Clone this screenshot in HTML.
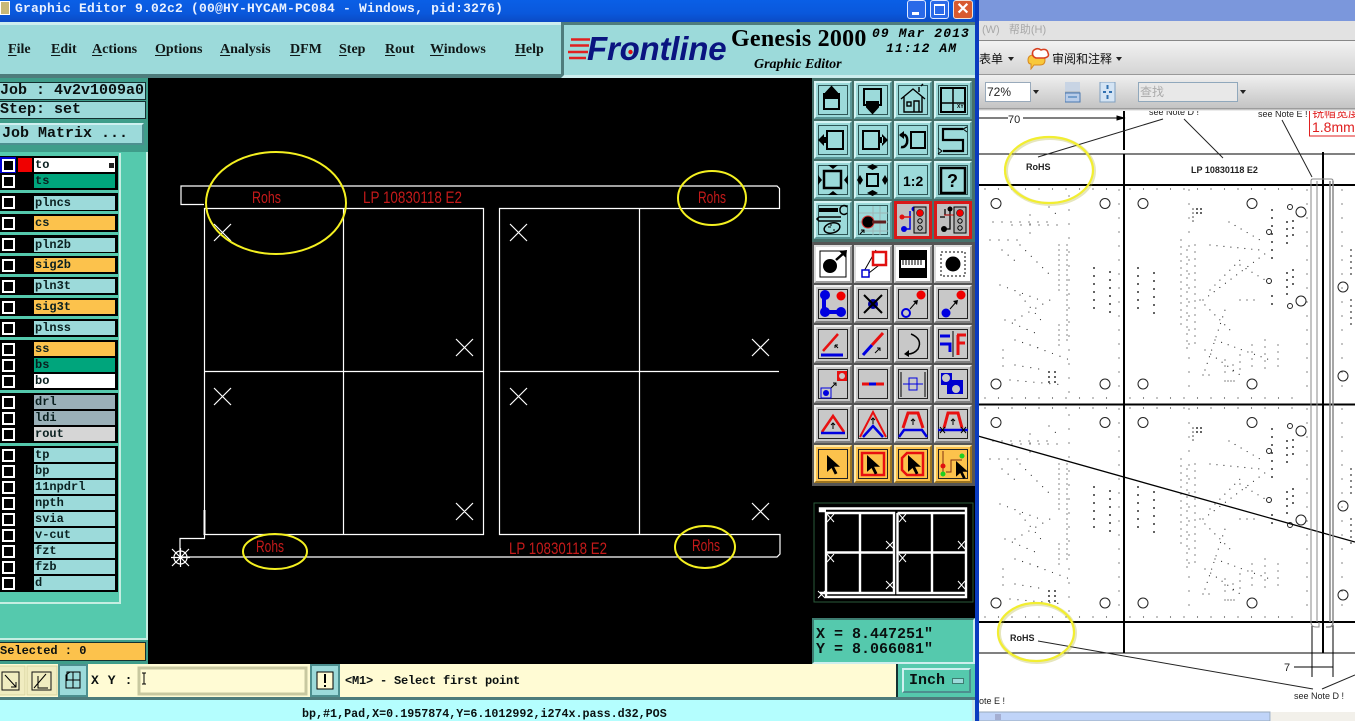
<!DOCTYPE html>
<html><head><meta charset="utf-8"><title>Graphic Editor</title>
<style>
html,body{margin:0;padding:0;background:#000}
#p{position:relative;width:1355px;height:721px;overflow:hidden;background:#55c9ad;font-family:"Liberation Mono",monospace}
#p div,#p svg{position:absolute}
.t{white-space:pre;font:bold 12px/14px "Liberation Mono",monospace;color:#0a1010}
.m{top:41px;font:bold 14px/17px "Liberation Serif",serif;color:#101818;white-space:pre}
.m u{text-underline-offset:2px}
.g{left:0;width:118px;background:#000}
.r{left:34px;width:81px;height:14px;font:bold 12px/14px "Liberation Mono",monospace;color:#0a2020;white-space:pre;padding:0 0 0 1px;box-sizing:border-box;background:#9cdada}
.c{left:2px;width:13px;height:13px;box-sizing:border-box;border:2px solid #fff;background:#000}
.o{background:#fcc24c}.e{background:#00a57c}.w{background:#fff}.y{background:#9ab0b8}.l{background:#d6d6d6}
.bev{box-sizing:border-box;border:2px solid;border-color:#cff0f0 #4d8f8f #4d8f8f #cff0f0}
.cn{font-family:"Liberation Sans","Noto Sans CJK SC",sans-serif;white-space:pre}
</style></head><body><div id="p">

<!-- title bar -->
<div style="left:0;top:0;width:979px;height:22px;background:linear-gradient(#0a5fe6,#0a58dc 60%,#0b4bc4)"></div>
<div style="left:0;top:1px;width:10px;height:14px;background:#c8b878;border:1px solid #fff;box-sizing:border-box"></div>
<div class="t" style="left:15px;top:1px;color:#e8f0ff;font:bold 13px/16px 'Liberation Mono',monospace;letter-spacing:.2px">Graphic Editor 9.02c2 (00@HY-HYCAM-PC084 - Windows, pid:3276)</div>
<div style="left:907px;top:0;width:19px;height:19px;border-radius:3px;border:1px solid #dfe8ff;box-sizing:border-box;background:#2a6ae8"><div style="left:4px;top:11px;width:7px;height:3px;background:#fff"></div></div>
<div style="left:930px;top:0;width:19px;height:19px;border-radius:3px;border:1px solid #dfe8ff;box-sizing:border-box;background:#2a6ae8"><div style="left:3px;top:3px;width:11px;height:11px;border:1px solid #fff;border-top-width:2px;box-sizing:border-box"></div></div>
<div style="left:953px;top:0;width:20px;height:19px;border-radius:3px;border:1px solid #f0e0d8;box-sizing:border-box;background:#d85a30;color:#fff;font:bold 16px/17px 'Liberation Sans',sans-serif;text-align:center">✕</div>

<!-- menu -->
<div style="left:0;top:22px;width:979px;height:3px;background:#cdeeee"></div>
<div style="left:0;top:25px;width:563px;height:49px;background:#9cdada"></div>
<div style="left:0;top:74px;width:563px;height:4px;background:#4e7c7c"></div>
<div class="m" style="left:8px"><u>F</u>ile</div>
<div class="m" style="left:51px"><u>E</u>dit</div>
<div class="m" style="left:92px"><u>A</u>ctions</div>
<div class="m" style="left:155px"><u>O</u>ptions</div>
<div class="m" style="left:220px"><u>A</u>nalysis</div>
<div class="m" style="left:290px"><u>D</u>FM</div>
<div class="m" style="left:339px"><u>S</u>tep</div>
<div class="m" style="left:385px"><u>R</u>out</div>
<div class="m" style="left:430px"><u>W</u>indows</div>
<div class="m" style="left:515px"><u>H</u>elp</div>

<!-- logo -->
<div style="left:561px;top:22px;width:418px;height:56px;background:#9cdada;box-sizing:border-box;border:3px solid;border-color:#4e7c7c #cdeeee #cdeeee #4e7c7c"></div>
<svg style="left:566px;top:36px" width="26" height="26"><path d="M5 3.500H24M4 9.500H23M2 16H22M3 22H20" stroke="#e02020" stroke-width="2.500" fill="none"/></svg>
<div style="left:587px;top:30px;font:italic bold 33px/38px 'Liberation Sans',sans-serif;color:#0a1480;white-space:pre;letter-spacing:-.2px">Frontline</div>
<svg style="left:621px;top:40px" width="20" height="22"><circle cx="9.500" cy="12" r="2.200" fill="#e01010"/></svg>
<div style="left:731px;top:24px;font:bold 24px/30px 'Liberation Serif',serif;color:#000;white-space:pre;letter-spacing:.25px">Genesis 2000</div>
<div style="left:754px;top:56px;font:italic bold 14px/17px 'Liberation Serif',serif;color:#000;white-space:pre">Graphic Editor</div>
<div class="t" style="left:872px;top:26px;font:italic bold 13px/15px 'Liberation Mono',monospace;color:#000;letter-spacing:1.1px">09 Mar 2013</div>
<div class="t" style="left:886px;top:41px;font:italic bold 13px/15px 'Liberation Mono',monospace;color:#000;letter-spacing:1.1px">11:12 AM</div>

<!-- canvas -->
<div style="left:148px;top:78px;width:664px;height:586px;background:#000"></div>
<svg style="left:148px;top:78px" width="664" height="586" viewBox="148 78 664 586">
<g fill="none" stroke="#fff" stroke-width="1.200">
<path d="M204 204.500H181V186H777L779.500 188.500V208.500H499.500V534.500H780V554L777 557H180V538.500H204.500V208.500H483.500V534.500H204.500"/>
<path d="M343.500 209V534M204 371.500H483M639.500 209V534M499 371.500H779"/>
<path d="M204.500 510V535" stroke-width="2"/>
<path d="M214 224L231 241M231 224L214 241M456 339L473 356M473 339L456 356M214 388L231 405M231 388L214 405M456 503L473 520M473 503L456 520M510 224L527 241M527 224L510 241M752 339L769 356M769 339L752 356M510 388L527 405M527 388L510 405M752 503L769 520M769 503L752 520"/>
<circle cx="180.500" cy="557.500" r="6.500"/><path d="M172 549L189 566M189 549L172 566M180.500 548V567M171 557.500H190"/>
</g>
<g fill="#c41a1a" font-family="Liberation Sans,sans-serif" font-size="17">
<text x="252" y="203" textLength="29" lengthAdjust="spacingAndGlyphs">Rohs</text>
<text x="363" y="203" textLength="99" lengthAdjust="spacingAndGlyphs">LP 10830118 E2</text>
<text x="698" y="203" textLength="28" lengthAdjust="spacingAndGlyphs">Rohs</text>
<text x="256" y="552" textLength="28" lengthAdjust="spacingAndGlyphs">Rohs</text>
<text x="509" y="554" textLength="98" lengthAdjust="spacingAndGlyphs">LP 10830118 E2</text>
<text x="692" y="551" textLength="28" lengthAdjust="spacingAndGlyphs">Rohs</text>
</g>
<g fill="none" stroke="#f4f020" stroke-width="2">
<ellipse cx="276" cy="203" rx="70" ry="51"/>
<ellipse cx="712" cy="198" rx="34" ry="27"/>
<ellipse cx="275" cy="551.500" rx="32" ry="17.500"/>
<ellipse cx="705" cy="547" rx="30" ry="21"/>
</g>
</svg>

<!-- left panel -->
<div style="left:0;top:78px;width:148px;height:586px;background:#3f9d8a"></div>
<div class="t" style="left:0;top:82px;width:146px;height:18px;box-sizing:border-box;background:#9cdada;border:1px solid #143030;border-left:0;font-size:15px;line-height:15px">Job : 4v2v1009a0</div>
<div class="t" style="left:0;top:101px;width:146px;height:18px;box-sizing:border-box;background:#9cdada;border:1px solid #143030;border-left:0;font-size:15px;line-height:15px">Step: set</div>
<div class="t bev" style="left:0;top:123px;width:144px;height:22px;background:#9cdada;font-size:15px;line-height:18px;padding-left:2px;border-left:0">Job Matrix ...</div>
<div style="left:0;top:152px;width:146px;height:486px;background:#55c9ad"></div>
<div style="left:119px;top:153px;width:2px;height:450px;background:#c5eee2"></div>
<div style="left:0;top:602px;width:121px;height:2px;background:#c5eee2"></div>
<div style="left:0;top:638px;width:148px;height:2px;background:#c5eee2"></div>
<div style="left:146px;top:152px;width:2px;height:488px;background:#c5eee2"></div>
<div class="t" style="left:0;top:642px;width:146px;height:19px;box-sizing:border-box;background:#fcc24c;border:1px solid #143030;border-left:0;line-height:17px;font-size:12px">Selected : 0</div>

<div class="g" style="top:156px;height:34px"></div>
<div class="g" style="top:193px;height:18px"></div>
<div class="g" style="top:214px;height:18px"></div>
<div class="g" style="top:235px;height:18px"></div>
<div class="g" style="top:256px;height:18px"></div>
<div class="g" style="top:277px;height:18px"></div>
<div class="g" style="top:298px;height:18px"></div>
<div class="g" style="top:319px;height:18px"></div>
<div class="g" style="top:340px;height:50px"></div>
<div class="g" style="top:393px;height:50px"></div>
<div class="g" style="top:446px;height:146px"></div>

<div style="left:0;top:157px;width:16px;height:16px;background:#0000d0"></div>
<div style="left:18px;top:158px;width:14px;height:14px;background:#f00000"></div>
<div class="r w" style="top:158px">to</div>
<div style="left:109px;top:163px;width:5px;height:5px;background:#222"></div>
<div class="r e" style="top:174px">ts</div>
<div class="r" style="top:196px">plncs</div>
<div class="r o" style="top:216px">cs</div>
<div class="r" style="top:238px">pln2b</div>
<div class="r o" style="top:258px">sig2b</div>
<div class="r" style="top:279px">pln3t</div>
<div class="r o" style="top:300px">sig3t</div>
<div class="r" style="top:321px">plnss</div>
<div class="r o" style="top:342px">ss</div>
<div class="r e" style="top:358px">bs</div>
<div class="r w" style="top:374px">bo</div>
<div class="r y" style="top:395px">drl</div>
<div class="r y" style="top:411px">ldi</div>
<div class="r l" style="top:427px">rout</div>
<div class="r" style="top:448px">tp</div>
<div class="r" style="top:464px">bp</div>
<div class="r" style="top:480px">11npdrl</div>
<div class="r" style="top:496px">npth</div>
<div class="r" style="top:512px">svia</div>
<div class="r" style="top:528px">v-cut</div>
<div class="r" style="top:544px">fzt</div>
<div class="r" style="top:560px">fzb</div>
<div class="r" style="top:576px">d</div>

<div class="c" style="top:159px"></div><div class="c" style="top:175px"></div><div class="c" style="top:196px"></div><div class="c" style="top:217px"></div>
<div class="c" style="top:238px"></div><div class="c" style="top:259px"></div><div class="c" style="top:280px"></div><div class="c" style="top:301px"></div>
<div class="c" style="top:322px"></div><div class="c" style="top:343px"></div><div class="c" style="top:359px"></div><div class="c" style="top:375px"></div>
<div class="c" style="top:396px"></div><div class="c" style="top:412px"></div><div class="c" style="top:428px"></div><div class="c" style="top:449px"></div>
<div class="c" style="top:465px"></div><div class="c" style="top:481px"></div><div class="c" style="top:497px"></div><div class="c" style="top:513px"></div>
<div class="c" style="top:529px"></div><div class="c" style="top:545px"></div><div class="c" style="top:561px"></div><div class="c" style="top:577px"></div>

<!-- right toolbar -->
<div style="left:812px;top:78px;width:163px;height:164px;background:#46706a"></div>
<div style="left:812px;top:242px;width:163px;height:244px;background:#555"></div>
<svg style="left:812px;top:78px" width="163" height="410" viewBox="812 78 163 410">
<defs>
<g id="bT"><rect width="38" height="38" fill="#9cdada"/><path d="M0 38V0H38L36 2H2V36Z" fill="#d6f4f4"/><path d="M38 0V38H0L2 36H36V2Z" fill="#5a9696"/><rect x="4.500" y="4.500" width="29" height="29" fill="none" stroke="#2e5656"/></g>
<g id="bG"><rect width="38" height="38" fill="#c8c8c8"/><path d="M0 38V0H38L36 2H2V36Z" fill="#f0f0f0"/><path d="M38 0V38H0L2 36H36V2Z" fill="#808080"/><rect x="4.500" y="4.500" width="29" height="29" fill="none" stroke="#222"/></g>
<g id="bO"><rect width="38" height="38" fill="#fcc24c"/><path d="M0 38V0H38L36 2H2V36Z" fill="#ffe9a8"/><path d="M38 0V38H0L2 36H36V2Z" fill="#9c7420"/><rect x="4.500" y="4.500" width="29" height="29" fill="none" stroke="#222"/></g>
<g id="bW"><rect width="38" height="38" fill="#fff"/><path d="M38 0V38H0L2 36H36V2Z" fill="#a0a0a0"/><path d="M0 38V0H38L36 2H2V36Z" fill="#ddd"/></g>
<path id="arr" d="M0 0L0 13L3.500 10L6 15L8 14L5.500 9L10 9Z" fill="#000"/>
</defs>
<use href="#bT" x="814" y="81"/><use href="#bT" x="854" y="81"/><use href="#bT" x="894" y="81"/><use href="#bT" x="934" y="81"/>
<use href="#bT" x="814" y="121"/><use href="#bT" x="854" y="121"/><use href="#bT" x="894" y="121"/><use href="#bT" x="934" y="121"/>
<use href="#bT" x="814" y="161"/><use href="#bT" x="854" y="161"/><use href="#bT" x="894" y="161"/><use href="#bT" x="934" y="161"/>
<use href="#bT" x="814" y="201"/><use href="#bT" x="854" y="201"/><use href="#bT" x="894" y="201"/><use href="#bT" x="934" y="201"/>
<g fill="none" stroke="#000" stroke-width="2">
<g transform="translate(814,81)"><rect x="10" y="13" width="15" height="15"/><path d="M17.500 6L12 12V17H23V12Z" fill="#000"/></g>
<g transform="translate(854,81)"><rect x="10" y="8" width="17" height="16"/><path d="M18.500 32L13 26V21H24V26Z" fill="#000"/></g>
<g transform="translate(894,81)" stroke-width="1.400"><path d="M7 18L19 8L31 18M10 16V31H28V16M25 11V6M27 5L29 3"/><rect x="13" y="21" width="4" height="4"/><path d="M20 31V20H25V31"/></g>
<g transform="translate(934,81)"><rect x="7" y="7" width="24" height="24"/><path d="M19 7V31M7 22H31" stroke-width="1.500"/></g>
<g transform="translate(814,121)"><rect x="13" y="10" width="16" height="18"/><path d="M4 19L10 13V25Z M9 16H14V22H9Z" fill="#000" stroke="none"/></g>
<g transform="translate(854,121)"><rect x="9" y="10" width="16" height="18"/><path d="M34 19L28 13V25Z M24 16H29V22H24Z" fill="#000" stroke="none"/></g>
<g transform="translate(894,121)"><rect x="17" y="11" width="14" height="16"/><path d="M6 14H11Q14 16 13 22Q11 27 7 26" stroke-width="2.500"/><path d="M5 14L10 10V18Z" fill="#000" stroke="none"/></g>
<g transform="translate(934,121)"><path d="M29 8H9V19H29V30H9" stroke-width="2.200"/><path d="M33 6L29 8L33 11M4 27L8 30L4 33" stroke-width="1"/></g>
<g transform="translate(814,161)"><rect x="10" y="10" width="17" height="17" stroke-width="2.500"/><path d="M19 8L14 4H24ZM19 30L14 34H24ZM8 19L4 14V24ZM30 19L34 14V24Z" fill="#000" stroke="none"/></g>
<g transform="translate(854,161)"><rect x="13" y="13" width="11" height="12"/><path d="M18.500 9L13 6L18.500 3L24 6ZM18.500 29L13 32L18.500 35L24 32ZM9 19L6 14L3 19L6 24ZM28 19L31 14L34 19L31 24Z" fill="#000" stroke="none"/></g>
<g transform="translate(934,161)"><rect x="7" y="7" width="24" height="25" stroke-width="2.500"/></g>
<g transform="translate(814,201)" stroke-width="1.500"><path d="M5 8H24M5 10H24" stroke-width="2"/><path d="M26 9A4 4 0 0 1 33 6M26 9A4 4 0 0 0 33 12"/><path d="M5 16H27M5 16L3 18L5 20H27"/><ellipse cx="18" cy="27" rx="8" ry="5" transform="rotate(-15 18 27)"/><path d="M14 26h3M19 29h2M16 24h2" stroke-width="1"/></g>
<g transform="translate(854,201)"><path d="M5 21H34M19 5V34M5 12H34M5 30H34M26 5V34" stroke="#9cb6b6" stroke-width="1"/><circle cx="14" cy="21" r="6" fill="#000" stroke="#e03030" stroke-width="1"/><path d="M18 21H32" stroke-width="3" stroke="#602020"/><path d="M6 33L10 29M7 29H10V32" stroke-width="1"/></g>
</g>
<g transform="translate(894,201)"><rect x="1.500" y="1.500" width="35" height="35" fill="#c0c0c0" stroke="#d81818" stroke-width="3"/><g fill="none" stroke-width="1.500"><path d="M16 10V28H10" stroke="#0000e0"/><path d="M8 16H17" stroke="#e01010"/></g><circle cx="20" cy="8" r="2.500" fill="#0000e0"/><circle cx="8" cy="16" r="2.500" fill="#e01010"/><circle cx="10" cy="28" r="3" fill="#0000e0"/><rect x="20" y="6" width="12" height="26" fill="#b0b0b0" stroke="#000"/><circle cx="26" cy="12" r="3.500" fill="#f00000" stroke="#000" stroke-width=".5"/><circle cx="26" cy="20" r="2.200" fill="none" stroke="#000"/><circle cx="26" cy="27" r="2.200" fill="none" stroke="#000"/></g>
<g transform="translate(934,201)"><rect x="1.500" y="1.500" width="35" height="35" fill="#c0c0c0" stroke="#d81818" stroke-width="3"/><path d="M16 9V28H10M6 16H11M11 8V14M11 14H16" fill="none" stroke="#000" stroke-width="1.300"/><path d="M10 14H20V11" fill="none" stroke="#d81818"/><circle cx="16" cy="8" r="2.500" fill="#000"/><circle cx="10" cy="28" r="3" fill="#000"/><rect x="20" y="6" width="12" height="26" fill="#b0b0b0" stroke="#000"/><circle cx="26" cy="12" r="3.500" fill="#f00000" stroke="#000" stroke-width=".5"/><circle cx="26" cy="20" r="2.200" fill="none" stroke="#000"/><circle cx="26" cy="27" r="2.200" fill="none" stroke="#000"/></g>
<text x="903" y="186" font-family="Liberation Sans,sans-serif" font-weight="bold" font-size="14" fill="#000">1:2</text>
<text x="947" y="187" font-family="Liberation Sans,sans-serif" font-weight="bold" font-size="18" fill="#000">?</text>
<text x="957" y="108" font-family="Liberation Sans,sans-serif" font-weight="bold" font-size="5" fill="#000">XY</text>

<use href="#bW" x="814" y="245"/><use href="#bW" x="854" y="245"/><use href="#bW" x="894" y="245"/><use href="#bW" x="934" y="245"/>
<use href="#bG" x="814" y="285"/><use href="#bG" x="854" y="285"/><use href="#bG" x="894" y="285"/><use href="#bG" x="934" y="285"/>
<use href="#bG" x="814" y="325"/><use href="#bG" x="854" y="325"/><use href="#bG" x="894" y="325"/><use href="#bG" x="934" y="325"/>
<use href="#bG" x="814" y="365"/><use href="#bG" x="854" y="365"/><use href="#bG" x="894" y="365"/><use href="#bG" x="934" y="365"/>
<use href="#bG" x="814" y="405"/><use href="#bG" x="854" y="405"/><use href="#bG" x="894" y="405"/><use href="#bG" x="934" y="405"/>
<use href="#bO" x="814" y="445"/><use href="#bO" x="854" y="445"/><use href="#bO" x="894" y="445"/><use href="#bO" x="934" y="445"/>

<g transform="translate(814,245)" fill="none" stroke="#000"><rect x="6" y="6" width="26" height="26" stroke-width="1"/><circle cx="16" cy="21" r="6.500" fill="#000"/><path d="M22 15L31 7" stroke-width="2.500"/><path d="M33 5L25 6L32 13Z" fill="#000" stroke="none"/></g>
<g transform="translate(854,245)" fill="none"><path d="M9 28L22 5M11 31L33 14" stroke="#000"/><rect x="19" y="7" width="13" height="13" fill="#fff" stroke="#e01010" stroke-width="2.500"/><rect x="8" y="25" width="7" height="7" fill="#fff" stroke="#0000d0" stroke-width="1.500"/></g>
<g transform="translate(894,245)"><rect x="5" y="5" width="28" height="28" fill="#000"/><rect x="7" y="15" width="24" height="8" fill="#fff"/><path d="M9 15V20M12 15V20M15 15V20M18 15V20M21 15V20M24 15V20M27 15V20" stroke="#000" stroke-width="1"/></g>
<g transform="translate(934,245)"><rect x="7" y="7" width="24" height="24" fill="none" stroke="#000" stroke-dasharray="2 2"/><circle cx="19" cy="19" r="7.500" fill="#000"/></g>

<g transform="translate(814,285)"><path d="M10 10V27H24" fill="none" stroke="#0000e0" stroke-width="4"/><circle cx="11" cy="10" r="5" fill="#0000e0"/><circle cx="11" cy="27" r="5" fill="#0000e0"/><circle cx="27" cy="27" r="5" fill="#0000e0"/><circle cx="27" cy="11" r="4.500" fill="#f00000"/></g>
<g transform="translate(854,285)"><circle cx="19" cy="19" r="5" fill="#0000a0"/><path d="M10 10L28 28M28 10L10 28" stroke="#000" stroke-width="2"/></g>
<g transform="translate(894,285)"><circle cx="12" cy="28" r="4" fill="none" stroke="#0000e0" stroke-width="2"/><circle cx="27" cy="10" r="4.500" fill="#f00000"/><path d="M16 24L23 16" stroke="#000"/><path d="M24 15L19 16L23 20Z"/></g>
<g transform="translate(934,285)"><circle cx="12" cy="28" r="4.500" fill="#0000e0"/><circle cx="27" cy="10" r="4.500" fill="#f00000"/><path d="M16 24L23 16" stroke="#000"/><path d="M24 15L19 16L23 20Z"/></g>

<g transform="translate(814,325)"><path d="M9 26L24 9" stroke="#e81010" stroke-width="2.500"/><path d="M7 30H29" stroke="#0000e0" stroke-width="3"/><path d="M21 20L24 23M21 20V23M21 20H24" stroke="#000"/></g>
<g transform="translate(854,325)"><path d="M9 30L18 20" stroke="#0000e0" stroke-width="3"/><path d="M18 20L29 8" stroke="#e81010" stroke-width="3"/><path d="M21 28L26 23M23 23H26V26" stroke="#000" fill="none"/></g>
<g transform="translate(894,325)"><path d="M17 9Q29 14 24 24Q20 29 14 29" fill="none" stroke="#000" stroke-width="1.500"/><path d="M10 29L15 25V32Z"/></g>
<g transform="translate(934,325)"><path d="M6 11H16M6 19H16V27" fill="none" stroke="#0000e0" stroke-width="3"/><path d="M19 6V32" stroke="#000"/><path d="M23 10H32M23 18H31M24 10V30" fill="none" stroke="#e81010" stroke-width="3"/></g>

<g transform="translate(814,365)"><rect x="7" y="23" width="10" height="10" fill="none" stroke="#0000e0"/><circle cx="12" cy="28" r="3" fill="#0000e0"/><rect x="23" y="6" width="10" height="10" fill="#e81010"/><circle cx="28" cy="11" r="3" fill="#c8c8c8"/><path d="M17 23L22 18M19 18H22V21" fill="none" stroke="#000"/></g>
<g transform="translate(854,365)"><path d="M8 19H30" stroke="#e81010" stroke-width="3"/><path d="M15 19H22" stroke="#0000e0" stroke-width="3"/></g>
<g transform="translate(894,365)" fill="none"><path d="M7 7V32M31 7V32" stroke="#000"/><path d="M9 19H29" stroke="#0000e0"/><rect x="15" y="13" width="8" height="12" stroke="#0000e0"/></g>
<g transform="translate(934,365)"><path d="M7 8H18V15H29V29H13V20H7Z" fill="#0000d0"/><circle cx="12" cy="13" r="4" fill="#c8c8c8"/><circle cx="22" cy="24" r="4" fill="#c8c8c8"/></g>

<g transform="translate(814,405)" fill="none"><path d="M8 27L19 11L30 27" stroke="#e81010" stroke-width="2.500"/><path d="M7 28H31" stroke="#0000e0" stroke-width="2.500"/><path d="M19 24V18M17 20L19 18L21 20" stroke="#000"/></g>
<g transform="translate(854,405)" fill="none"><path d="M6 32L19 7L32 32" stroke="#e81010" stroke-width="2"/><path d="M9 32L19 21L29 32" stroke="#0000e0" stroke-width="2.500"/><path d="M19 19V13M17 15L19 13L21 15" stroke="#000"/></g>
<g transform="translate(894,405)" fill="none"><path d="M9 23L14 8H24L29 23" stroke="#e81010" stroke-width="3"/><path d="M5 32L10 25H28L33 32" stroke="#0000e0" stroke-width="2.500"/><path d="M19 20V14M17 16L19 14L21 16" stroke="#000"/></g>
<g transform="translate(934,405)" fill="none"><path d="M10 23L14 8H24L28 23" stroke="#e81010" stroke-width="3"/><path d="M4 25H34" stroke="#0000e0" stroke-width="2.500"/><path d="M19 20V14M17 16L19 14L21 16M6 22L11 28M11 22L6 28M27 22L32 28M32 22L27 28" stroke="#000"/></g>

<g transform="translate(814,445)"><use href="#arr" transform="translate(13,10) scale(1.300)"/></g>
<g transform="translate(854,445)"><rect x="8" y="8" width="22" height="22" fill="none" stroke="#e81010" stroke-width="2.500"/><use href="#arr" transform="translate(13,10) scale(1.300)"/></g>
<g transform="translate(894,445)"><path d="M13 8H29V30H13L8 25V13Z" fill="none" stroke="#e81010" stroke-width="2.500"/><use href="#arr" transform="translate(14,10) scale(1.300)"/></g>
<g transform="translate(934,445)"><path d="M9 6V27M12 27H17V15H28" fill="none" stroke="#803010"/><circle cx="9" cy="21" r="2.500" fill="#e01010"/><circle cx="9" cy="29" r="2.500" fill="#20d020"/><circle cx="28" cy="11" r="2.500" fill="#20d020"/><use href="#arr" transform="translate(22,16) scale(1.200)"/></g>
</svg>

<!-- preview -->
<div style="left:812px;top:486px;width:163px;height:134px;background:#000"></div>
<svg style="left:812px;top:486px" width="163" height="134" viewBox="812 486 163 134">
<rect x="814" y="503" width="159" height="99" fill="none" stroke="#2a5a3a"/>
<g fill="none" stroke="#fff" stroke-width="2.400">
<path d="M826 511H820V508.500H966V597H826V593H820M826 513H894V593H826ZM860 513V593M826 552.500H894"/>
<path d="M897.500 513H965M897.500 513V593H965M932 513V593M897.500 552.500H965"/>
</g>
<g fill="none" stroke="#fff" stroke-width="1">
<path d="M827 514L834 522M834 514L827 522M886 541L894 549M894 541L886 549M827 554L834 562M834 554L827 562M886 581L894 589M894 581L886 589M899 514L906 522M906 514L899 522M958 541L965 549M965 541L958 549M899 554L906 562M906 554L899 562M958 581L965 589M965 581L958 589M818 591L825 598M825 591L818 598"/>
</g>
</svg>

<!-- coord panel -->
<div style="left:812px;top:618px;width:163px;height:46px;background:#55c9ad;box-sizing:border-box;border:2px solid;border-color:#3d7c70 #cdeeee #cdeeee #3d7c70"></div>
<div class="t" style="left:816px;top:627px;font-size:15px;line-height:15px">X = 8.447251"</div>
<div class="t" style="left:816px;top:642px;font-size:15px;line-height:15px">Y = 8.066081"</div>
<div style="left:975px;top:0;width:4px;height:721px;background:#0a3bbf"></div>

<!-- bottom bar -->
<div style="left:0;top:664px;width:975px;height:33px;background:#fffbd4"></div>
<div style="left:0;top:697px;width:975px;height:3px;background:#4e7c7c"></div>
<div style="left:0;top:700px;width:975px;height:21px;background:#b4fefe"></div>
<div style="left:972px;top:700px;width:3px;height:21px;background:#c8e8e8"></div>
<svg style="left:0;top:664px" width="345" height="33" viewBox="0 664 345 33" fill="none" stroke="#000">
<rect x="-1" y="666" width="26" height="29" fill="#f0ecc0" stroke="#d8d4a0"/>
<rect x="27" y="666" width="30" height="29" fill="#f0ecc0" stroke="#d8d4a0"/>
<rect x="2" y="672" width="17" height="18" stroke="#111"/><path d="M5 675L16 687M16 682V687H11"/>
<rect x="32" y="672" width="19" height="18" stroke="#111"/><path d="M34 688L46 674M38 676V688H48"/>
<rect x="59" y="665" width="28" height="31" fill="#9cdada" stroke="#4d8f8f" stroke-width="2"/>
<path d="M67 681V672H80V688H66V675L70 672M66 680H80M73 672V688" stroke-width="1"/>
<rect x="139" y="668" width="167" height="26" fill="#fffbd4" stroke="#c8c8a0" stroke-width="3"/>
<path d="M144 673V684M142 673H146M142 684H146" stroke-width="1"/>
<rect x="311" y="665" width="28" height="31" fill="#9cdada" stroke="#4d8f8f" stroke-width="2"/>
<rect x="317" y="672" width="16" height="17" fill="#fffbd4"/>
<path d="M325 674V683M325 685V687" stroke-width="2"/>
</svg>
<div class="t" style="left:91px;top:674px;font-size:13px;letter-spacing:.6px">X Y :</div>
<div class="t" style="left:345px;top:674px;font-size:12px;letter-spacing:-.2px">&lt;M1&gt; - Select first point</div>
<div style="left:896px;top:664px;width:79px;height:33px;background:#55c9ad;border-left:2px solid #143030;box-sizing:border-box"></div>
<div class="t bev" style="left:902px;top:668px;width:69px;height:25px;font-size:15px;line-height:21px;padding-left:5px;background:#55c9ad">Inch</div>
<div style="left:952px;top:678px;width:12px;height:6px;background:#9cdada;border:1px solid #3d7c70;box-sizing:border-box"></div>
<div class="t" style="left:302px;top:707px;font-size:11.700px">bp,#1,Pad,X=0.1957874,Y=6.1012992,i274x.pass.d32,POS</div>

<!-- right window -->
<div style="left:979px;top:0;width:376px;height:721px;background:#fff"></div>
<div style="left:979px;top:0;width:376px;height:21px;background:#7b97dc"></div>
<div style="left:979px;top:21px;width:376px;height:19px;background:#e2e2e2"></div>
<div style="left:979px;top:40px;width:376px;height:1px;background:#888"></div>
<div style="left:979px;top:41px;width:376px;height:33px;background:linear-gradient(#f2f2f2,#d4d4d4)"></div>
<div style="left:979px;top:74px;width:376px;height:1px;background:#999"></div>
<div style="left:979px;top:75px;width:376px;height:33px;background:linear-gradient(#f0f0f0,#c4c4c4)"></div>
<div style="left:979px;top:108px;width:376px;height:3px;background:linear-gradient(#888,#fff)"></div>
<div class="cn" style="left:982px;top:22px;font-size:11px;line-height:16px;color:#a8a8a8">(W)   帮助(H)</div>
<div class="cn" style="left:979px;top:51px;font-size:12px;line-height:16px;color:#111">表单</div>
<div style="left:1008px;top:57px;width:0;height:0;border:3px solid transparent;border-top:4px solid #222;border-bottom:0"></div>
<svg style="left:1025px;top:46px" width="26" height="24"><path d="M3 14Q3 9 9 9H15Q20 9 20 14T15 19H9L6 23V18Q3 18 3 14Z" fill="#f8c83a" stroke="#d88820"/><path d="M8 5Q12 1 16 4Q22 2 23 7Q25 11 19 12H11Q6 10 8 5Z" fill="#fff" stroke="#d84020" stroke-width="1.500"/></svg>
<div class="cn" style="left:1052px;top:51px;font-size:12px;line-height:16px;color:#111">审阅和注释</div>
<div style="left:1116px;top:57px;width:0;height:0;border:3px solid transparent;border-top:4px solid #222;border-bottom:0"></div>
<div class="cn" style="left:985px;top:82px;width:46px;height:20px;box-sizing:border-box;background:#fff;border:1px solid #9ab;font-size:12px;line-height:18px;color:#222;padding-left:1px">72%</div>
<div style="left:1033px;top:90px;width:0;height:0;border:3px solid transparent;border-top:4px solid #222;border-bottom:0"></div>
<svg style="left:1065px;top:82px" width="55" height="21">
<rect x="0" y="0" width="15" height="9" fill="#c8d4e4"/><rect x="0" y="11" width="15" height="9" fill="#b8cce8" stroke="#4a78b0"/><path d="M0 10H15" stroke="#9ab"/><path d="M3 15H12" stroke="#3070b0"/>
<rect x="35" y="0" width="15" height="20" fill="#d4e4f4" stroke="#80a0c0"/><path d="M42.500 3V7M42.500 13V17M38 10H41M44 10H47" stroke="#3070b0" stroke-width="2"/>
</svg>
<div class="cn" style="left:1138px;top:82px;width:100px;height:20px;box-sizing:border-box;background:#e8e8e8;border:1px solid #90a8bc;font-size:12px;line-height:18px;color:#aaa;padding-left:1px">查找</div>
<div style="left:1240px;top:90px;width:0;height:0;border:3px solid transparent;border-top:4px solid #222;border-bottom:0"></div>

<svg style="left:979px;top:111px" width="376" height="610" viewBox="979 111 376 610">
<defs>
<g id="pcb">
<g fill="none" stroke="#222" stroke-width="1">
<circle cx="996" cy="203.500" r="5"/><circle cx="1105" cy="203.500" r="5"/><circle cx="1143" cy="203.500" r="5"/><circle cx="1252" cy="203.500" r="5"/>
<circle cx="1301" cy="212" r="5"/><circle cx="1290" cy="207" r="2.500"/><circle cx="1269" cy="232" r="2.500"/><circle cx="1269" cy="281" r="2.500"/>
<circle cx="1290" cy="306" r="2.500"/><circle cx="1301" cy="301" r="5"/>
<circle cx="1343" cy="287" r="5"/><circle cx="1343" cy="376" r="5"/>
<circle cx="996" cy="384" r="5"/><circle cx="1105" cy="384" r="5"/><circle cx="1143" cy="384" r="5"/><circle cx="1252" cy="384" r="5"/>
</g>
<g fill="none" stroke="#333" stroke-linecap="round">
<path d="M1094 268V316" stroke-width="2" stroke-dasharray="0 8"/><path d="M1110 272V320" stroke-width="2" stroke-dasharray="0 8"/>
<path d="M1138 268V316" stroke-width="2" stroke-dasharray="0 8"/><path d="M1154 273V320" stroke-width="2" stroke-dasharray="0 8"/>
<path d="M1272 210V266" stroke-width="2" stroke-dasharray="0 8"/><path d="M1272 296V306" stroke-width="2" stroke-dasharray="0 8"/>
<path d="M1287 222V244M1293 221V242M1287 273V296M1293 270V290" stroke-width="2" stroke-dasharray="0 7"/>
<path d="M1069 196V400M1119 190V395M1189 190V395M1307 190V395M1342 190V395" stroke-width="1.200" stroke-dasharray="0 14"/>
<path d="M985 398H1118M1130 398H1305M985 189H1120M1130 189H1305" stroke-width="1.200" stroke-dasharray="0 13.500"/>
<path d="M1067 245V325M1059 245V292M1059 325V350M1067 325V345" stroke-width="1.200" stroke-dasharray="0 5"/>
<path d="M1049 207L1059 217M1030 215V240M1012 225L1060 225M990 240L1022 240M993 222L1055 222" stroke-width="1.200" stroke-dasharray="0 9"/>
<path d="M1002 250L1020 265M1020 245L1050 275M1000 285L1040 300M1015 320L1050 300M1020 295L1045 325M1005 320L1040 335M1015 340L1045 350M1030 345L1070 360M1003 350L1003 372M1015 365L1045 370M1010 380L1065 385" stroke-width="1.200" stroke-dasharray="0 8"/>
<path d="M1049 372V384M1055 372V384" stroke-width="2" stroke-dasharray="0 5"/>
<path d="M1187 250V350M1195 245V345M1181 240V330M1200 300L1230 330M1210 290L1240 260M1205 350L1240 375M1203 300L1270 250M1215 340L1270 360M1240 355V370M1252 345V370M1265 340V370M1278 345V370M1205 370L1225 310M1210 245L1260 250M1229 222L1260 240M1240 265L1265 280M1240 300L1260 300" stroke-width="1.200" stroke-dasharray="0 7"/>
<path d="M1193 209V225" stroke-width="1.500" stroke-dasharray="0 4"/><path d="M1197 209V217M1201 209V217" stroke-width="2" stroke-dasharray="0 4"/>
<path d="M1225 381H1235" stroke-width="1.200" stroke-dasharray="0 3"/>
<path d="M1209 375H1200M1225 360V375M1233 365V375" stroke-width="1.200" stroke-dasharray="0 6"/>
<path d="M1351 250V280M1351 300V330" stroke-width="1.800" stroke-dasharray="0 6"/>
</g>
</g>
</defs>
<use href="#pcb"/><use href="#pcb" y="219"/>
<g fill="none" stroke="#000">
<path d="M979 154H1355"/>
<path d="M979 185H1355" stroke-width="2"/>
<path d="M979 404.500H1355M979 622H1355" stroke-width="2"/>
<path d="M979 653H1355"/>
<path d="M1124 110V150M1124 154V653" stroke-width="2"/>
<path d="M1323 152V653" stroke-width="2"/>
<path d="M979 118H1008M1023 118H1118"/><path d="M1124 118L1117 116V120Z" fill="#000"/>
<path d="M1038 157L1163 119M1184 119L1223 158M1282 120L1312 177" stroke="#222"/>
<path d="M978 436L1355 542" stroke-width="1.300"/>
<path d="M1038 641L1313 689M1322 689L1355 675" stroke="#222" stroke-width="1"/>
<path d="M1312 625V677M1333 625V677M1294 667H1333"/>
</g>
<g fill="none" stroke="#888" stroke-width="1">
<path d="M1311 181V622Q1311 627 1316 627H1319V622M1317 181V622"/>
<path d="M1330 181V622M1333 181V622Q1333 627 1329 627H1326" stroke-width="1.500"/>
<path d="M1311 181Q1311 179 1313 179H1331Q1333 179 1333 181"/>
</g>
<g fill="none" stroke="#b8b840" stroke-opacity=".35" stroke-width="4">
<ellipse cx="1050" cy="171" rx="44" ry="33"/><ellipse cx="1037" cy="633" rx="38" ry="29"/>
</g>
<g fill="none" stroke="#f2ee30" stroke-width="2.200">
<ellipse cx="1049" cy="170" rx="44" ry="33"/><ellipse cx="1036" cy="632" rx="38" ry="29"/>
</g>
<g font-family="Liberation Sans,sans-serif" font-size="9" fill="#222">
<text x="1026" y="170" font-weight="bold">RoHS</text>
<text x="1010" y="641" font-weight="bold">RoHS</text>
<text x="1191" y="173" font-weight="bold">LP 10830118  E2</text>
<text x="1149" y="115">see Note D !</text>
<text x="1258" y="117">see Note E !</text>
<text x="1294" y="699">see Note D !</text>
<text x="979" y="704">ote E !</text>
<text x="1008" y="123" font-size="11">70</text>
<text x="1284" y="671" font-size="11">7</text>
</g>
<rect x="1309.500" y="105" width="60" height="31" fill="#fff" stroke="#e02020"/>
<text x="1312" y="117" font-family="Liberation Sans,Noto Sans CJK SC,sans-serif" font-size="12" fill="#e02020">铣帽宽度</text>
<text x="1312" y="132" font-family="Liberation Sans,sans-serif" font-size="14" fill="#e02020">1.8mm</text>
<rect x="979" y="712" width="291" height="9" fill="#c0d4f8" stroke="#9ab"/>
<rect x="1271" y="712" width="84" height="9" fill="#f2f0ea"/>
<path d="M996 714V720M998 714V720M1000 714V720" stroke="#88a"/>
</svg>
</div></body></html>
